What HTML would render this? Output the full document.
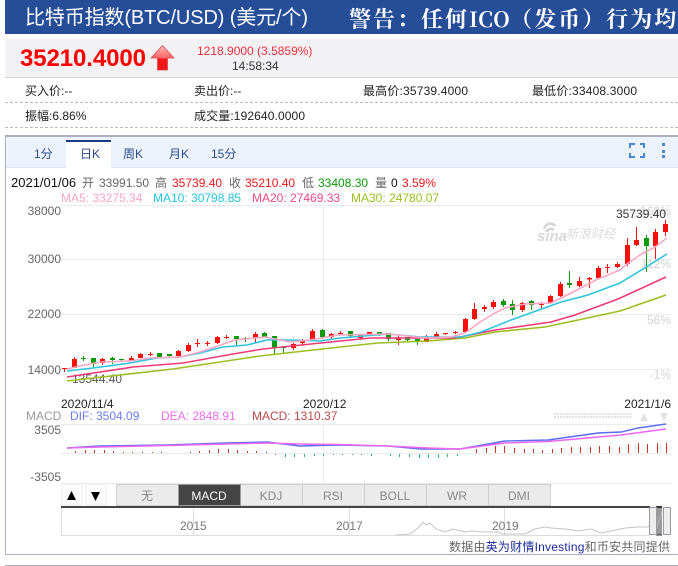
<!DOCTYPE html>
<html><head><meta charset="utf-8"><style>
html,body{margin:0;padding:0;background:#fff}
body{width:678px;height:566px;overflow:hidden;position:relative;font-family:"Liberation Sans","Noto Sans CJK SC",sans-serif}
svg{position:absolute;left:0;top:0}
text{font-family:"Liberation Sans","Noto Sans CJK SC",sans-serif;font-size:12px}
</style></head><body>
<svg width="678" height="566" viewBox="0 0 678 566">
<defs>
<linearGradient id="ag" x1="0" y1="0" x2="0" y2="1"><stop offset="0" stop-color="#fbb"/><stop offset=".5" stop-color="#f66"/><stop offset=".55" stop-color="#f01818"/><stop offset="1" stop-color="#f01818"/></linearGradient>
<pattern id="dots" width="3" height="3" patternUnits="userSpaceOnUse" x="554" y="413"><rect width="2" height="2" fill="#e2e2e2"/></pattern>
</defs>
<!-- header -->
<rect x="5" y="0" width="673" height="34" fill="#254d98"/>
<text x="25" y="24" fill="#fff" textLength="283" style="font-size:20px">比特币指数(BTC/USD) (美元/个)</text>
<text x="349" y="27" fill="#fff" font-weight="bold" style="font-family:'Noto Serif CJK SC','Liberation Serif',serif;font-size:22px;letter-spacing:2px">警告：任何<tspan style="font-size:21px;letter-spacing:.5px">ICO</tspan>（发币）行为均</text>
<!-- stats -->
<rect x="5" y="39" width="673" height="38" fill="#f2f2f5"/>
<rect x="5" y="77" width="673" height="1" fill="#d4d4da"/>
<text x="20" y="66" fill="#f00" font-weight="bold" textLength="126" style="font-size:24px">35210.4000</text>
<path d="M162.500 45.500L174 58h-6.500v12h-10V58H151z" fill="url(#ag)" stroke="#d84040" stroke-width=".7"/>
<text x="197" y="55" fill="#f5303c">1218.9000 (3.5859%)</text>
<text x="232" y="70" fill="#333">14:58:34</text>
<text x="25" y="95" fill="#222">买入价:--</text>
<text x="194" y="95" fill="#222">卖出价:--</text>
<text x="363" y="95" fill="#222" textLength="105">最高价:35739.4000</text>
<text x="532" y="95" fill="#222" textLength="105">最低价:33408.3000</text>
<text x="25" y="120" fill="#222">振幅:6.86%</text>
<text x="194" y="120" fill="#222" textLength="111">成交量:192640.0000</text>
<path d="M5 102.500H678M5 127.500H678" stroke="#bbb" stroke-dasharray="3 2" fill="none"/>
<!-- chart frame -->
<rect x="5" y="135" width="673" height="2" fill="#aeaec0"/>
<rect x="5" y="135" width="1" height="420" fill="#aeaec0"/>
<rect x="5" y="554" width="673" height="1" fill="#aeaec0"/>
<rect x="5" y="565" width="673" height="1" fill="#aeaec0"/>
<rect x="6" y="137" width="672" height="30" fill="#ecf3fd"/>
<rect x="6" y="167" width="672" height="1" fill="#d9e3f3"/>
<rect x="66" y="140" width="45" height="28" fill="#fff"/>
<rect x="66" y="140" width="45" height="2" fill="#1b3a8c"/>
<g fill="#2b4a8c">
<text x="34" y="158">1分</text><text x="80" y="158">日K</text><text x="123" y="158">周K</text><text x="169" y="158">月K</text><text x="211" y="158">15分</text>
</g>
<path d="M630 148v-4h5M640 144h4v4M644 153v4h-4M635 157h-5v-4" fill="none" stroke="#4a86d0" stroke-width="2"/>
<path d="M662 143h3v3h-3zM662 150h3v3h-3zM662 155h3v3h-3z" fill="#4a86d0"/>
<!-- info -->
<text x="11" y="187" fill="#111" style="font-size:13px">2021/01/06</text>
<text x="82" y="187" fill="#666">开</text><text x="99" y="187" fill="#666">33991.50</text>
<text x="155" y="187" fill="#666">高</text><text x="172" y="187" fill="#f01818">35739.40</text>
<text x="229" y="187" fill="#666">收</text><text x="245" y="187" fill="#f01818">35210.40</text>
<text x="302" y="187" fill="#666">低</text><text x="318" y="187" fill="#0a9a0a">33408.30</text>
<text x="375" y="187" fill="#666">量</text><text x="391" y="187" fill="#111">0</text><text x="402" y="187" fill="#f01818">3.59%</text>
<text x="61" y="202" fill="#ffa5c0">MA5: 33275.34</text>
<text x="153" y="202" fill="#22c4de">MA10: 30798.85</text>
<text x="252" y="202" fill="#f24a85">MA20: 27469.33</text>
<text x="351" y="202" fill="#98c020">MA30: 24780.07</text>
<!-- grid -->
<path d="M61 205.500H671M61 259.500H671M61 314.500H671M61 369.500H671M61 424.500H671M61 453.500H671M61 483.500H671M323.500 205V403M323.500 424V483" stroke="#ebebeb" fill="none"/>
<g fill="#666">
<text x="61" y="215" text-anchor="end">38000</text><text x="61" y="263" text-anchor="end">30000</text><text x="61" y="318" text-anchor="end">22000</text><text x="61" y="374" text-anchor="end">14000</text>
<text x="61" y="434" text-anchor="end">3505</text><text x="61" y="481" text-anchor="end">-3505</text>
</g>
<g fill="#d2d2d2" text-anchor="end">
<text x="671" y="215">160%</text><text x="671" y="268">112%</text><text x="671" y="324">56%</text><text x="671" y="379">-1%</text>
</g>
<!-- watermark -->
<text x="537" y="241" fill="#d8d8d8" font-weight="bold" font-style="italic" style="font-size:15px">sina</text>
<path d="M544 229c2-6 8-7 11-3M546 232c2-3 6-4 8-2" stroke="#d4d4d4" stroke-width="2.500" fill="none"/>
<text x="566" y="238" fill="#dcdcdc" font-style="italic" style="font-size:12.300px">新浪财经</text>
<text x="72" y="383" fill="#555">13544.40</text>
<text x="616" y="218" fill="#333">35739.40</text>
<!-- candles -->
<path fill="#f5100a" d="M72 359h5v9h-5zM100 359h5v4h-5zM129 358h5v2.500h-5zM138 354h5v4h-5zM176 351h5v5h-5zM186 345h5v6h-5zM215 337h5v6h-5zM253 334h5v4h-5zM291 344h5v4h-5zM300 341h5v2h-5zM310 331h5v9h-5zM329 334h5v3h-5zM358 335h5v3h-5zM367 332h5v2h-5zM396 338h5v2h-5zM424 337h5v5h-5zM434 334h5v3h-5zM463 319h5v13h-5zM472 309h5v10h-5zM482 307h5v2h-5zM491 302h5v5h-5zM520 303h5v7h-5zM539 303h5v2h-5zM548 296h5v7h-5zM558 284h5v12h-5zM577 281h5v5h-5zM587 278h5v1.500h-5zM596 268h5v10h-5zM615 264h5v3h-5zM625 245h5v19h-5zM634 240h5v5h-5zM653 232h5v14h-5zM663 224h5v8h-5z"/>
<path stroke="#f5100a" fill="none" d="M64.500 368v4M62 368.500h5M74.500 357v11M102.500 358v7M131.500 356v5M140.500 353v5M148 354.500h5M150.500 352v4M178.500 350v8M188.500 343v9M195 343.500h5M197.500 339v8M205 343.500h5M207.500 341v5M217.500 336v8M224 337.500h5M226.500 335v4M255.500 332v10M293.500 343v7M302.500 339v7M312.500 329v12M331.500 333v6M338 333.500h5M340.500 331v4M360.500 335v4M369.500 332v4M398.500 336v9M426.500 335v7M436.500 332v6M443 333.500h5M445.500 333v2M453 332.500h5M455.500 331v3M465.500 318v15M474.500 303v17M484.500 305v7M493.500 300v9M522.500 302v10M541.500 302v7M550.500 295v9M560.500 282v15M579.500 277v10M589.500 277v11M598.500 266v12M605 267.500h5M607.500 264v9M617.500 262v6M627.500 238v28M636.500 227v19M655.500 229v30M665.500 220v16"/>
<path fill="#0a9a0a" d="M91 358h5v6h-5zM110 358h5v2h-5zM157 353h5v4h-5zM167 354h5v2h-5zM234 336h5v3h-5zM262 333h5v4h-5zM272 336h5v12h-5zM320 330h5v7h-5zM348 331h5v5h-5zM377 332h5v2h-5zM386 333h5v6h-5zM405 337h5v3h-5zM415 339h5v2h-5zM501 301h5v4h-5zM510 304h5v6h-5zM529 301h5v4h-5zM567 283h5v2h-5zM644 238h5v8h-5z"/>
<path stroke="#0a9a0a" fill="none" d="M81 358.500h5M83.500 356v5M93.500 358v9M112.500 357v7M119 359.500h5M121.500 359v2M159.500 353v5M169.500 354v4M236.500 336v9M243 338.500h5M245.500 337v5M264.500 332v5M274.500 336v18M281 347.500h5M283.500 346v7M322.500 329v10M350.500 331v7M379.500 332v4M388.500 333v8M407.500 337v5M417.500 339v6M503.500 299v8M512.500 300v15M531.500 300v10M569.500 271v17M646.500 235v37"/>
<!-- MAs -->
<g fill="none" stroke-width="1.600" stroke-linejoin="round">
<path stroke="#9cbf1f" d="M67 381L173 369L260 356L340 347L378 343L428 341L465 338L495 332L545 327L578 320L620 311L666 295"/>
<path stroke="#f03a78" d="M67 377L133 367L183 363L233 354L263 349L340 341L371 338L455 338L495 330L551 322L575 315L618 299L666 277"/>
<path stroke="#2cc4de" d="M67 371L93 368L130 363L157 358L180 357L200 353L223 347L247 345L267 340L290 340L320 341L340 338L388 334L421 337L461 337L481 332L511 320L561 302L588 295L620 283L643 269L667 254"/>
<path stroke="#ffa6c4" d="M67 369L80 366L100 362L130 361L150 358L180 357L200 352L215 347L235 340L255 338L265 337L275 339L290 342L310 340L338 335L388 334L426 338L451 337L465 333L480 322L495 313L505 308L525 304L551 303L571 293L598 279L620 270L627 264L640 255L655 247L667 238"/>
</g>
<text x="61" y="408" fill="#222">2020/11/4</text>
<text x="303" y="408" fill="#222">2020/12</text>
<text x="671" y="408" fill="#222" text-anchor="end">2021/1/6</text>
<rect x="554" y="413" width="77" height="6" fill="url(#dots)"/>
<path d="M644 413l4 8h-8zM660 413h8l-4 8z" fill="#e2e2e2"/>
<!-- MACD -->
<text x="26" y="420" fill="#999">MACD</text>
<text x="70" y="420" fill="#6a7cf8">DIF: 3504.09</text>
<text x="161" y="420" fill="#ee6cf0">DEA: 2848.91</text>
<text x="252" y="420" fill="#b94a4a">MACD: 1310.37</text>
<path fill="none" stroke="#c43a1a" d="M75.500 451v2M85.500 450v3M94.500 450v3M104.500 450v3M113.500 451v2M123.500 452v1M132.500 452v1M142.500 452v1M152.500 452v1M161.500 452v1M190.500 452v1M199.500 451v2M209.500 450v3M218.500 449v4M228.500 449v4M237.500 450v3M247.500 451v2M256.500 451v2M266.500 452v1M476.500 449v4M486.500 448v5M495.500 446v7M504.500 446v7M514.500 448v5M524.500 449v4M533.500 449v4M542.500 450v3M552.500 449v4M561.500 448v5M571.500 447v6M580.500 447v6M590.500 447v6M599.500 446v7M609.500 446v7M619.500 447v6M628.500 444v9M638.500 443v10M647.500 444v9M657.500 443v10M666.500 443v10"/>
<path fill="none" stroke="#22b88a" d="M275.500 454v1M285.500 454v3M294.500 454v3M304.500 454v3M314.500 454v2M323.500 454v2M333.500 454v1M342.500 454v1M352.500 454v1M361.500 454v1M371.500 454v2M390.500 454v2M399.500 454v3M409.500 454v3M419.500 454v4M428.500 454v4M438.500 454v4M447.500 454v3M457.500 454v2"/>
<path fill="none" stroke="#5a6cf0" stroke-width="1.400" d="M67 448L100 446L167 445L227 443L267 442L300 446L338 445L388 446L421 449L460 449L505 441L548 440L598 433L621 432L638 428L666 424"/>
<path fill="none" stroke="#ee66ee" stroke-width="1.400" d="M67 448L100 447L167 445.500L227 444L267 443L300 444L338 444.500L388 446L428 448L460 449L505 443L548 441.500L598 437L621 435L666 429"/>
<!-- buttons -->
<rect x="62" y="484" width="20" height="21" fill="#fff" stroke="#eee"/>
<rect x="86" y="484" width="20" height="21" fill="#fff" stroke="#eee"/>
<path d="M71.500 491l4.500 9h-9zM91 492h9l-4.500 9z" fill="#000"/>
<g fill="#ebebeb" stroke="#cfcfcf">
<rect x="116.500" y="484.500" width="62" height="21"/><rect x="240.500" y="484.500" width="62" height="21"/><rect x="302.500" y="484.500" width="62" height="21"/><rect x="364.500" y="484.500" width="62" height="21"/><rect x="426.500" y="484.500" width="62" height="21"/><rect x="488.500" y="484.500" width="62" height="21"/>
</g>
<rect x="178.500" y="484.500" width="62" height="21" fill="#444" stroke="#999"/>
<g text-anchor="middle" fill="#888">
<text x="147" y="500">无</text><text x="271" y="500">KDJ</text><text x="333" y="500">RSI</text><text x="395" y="500">BOLL</text><text x="457" y="500">WR</text><text x="519" y="500">DMI</text>
</g>
<text x="209" y="500" text-anchor="middle" fill="#fff">MACD</text>
<!-- timeline -->
<rect x="61" y="506" width="589" height="2" fill="#444"/>
<path d="M61.500 508V535.500H650M193.500 508V535M349.500 508V535M504.500 508V535" fill="none" stroke="#ddd"/>
<g fill="#777">
<text x="180" y="530">2015</text><text x="336" y="530">2017</text><text x="492" y="530">2019</text>
</g>
<path fill="none" stroke="#c4c4c4" d="M396 535L410 534L418 528L423 522L426 525L430 523L436 529L445 532L453 529L465 532L471 531L485 532L498 532L503 534L525 534L535 529L545 527L551 528L565 529L578 531L591 529L601 533L611 531L625 528L638 527L648 527L653 523"/>
<rect x="656" y="507" width="6" height="28" fill="#999"/>
<rect x="656" y="506" width="6" height="2" fill="#333"/>
<path d="M656 535h6" stroke="#333"/>
<path d="M656 530L662 512" stroke="#bbb"/>
<rect x="649.500" y="507.500" width="7" height="27" fill="#eee" stroke="#9a9aaa"/>
<rect x="663.500" y="507.500" width="7" height="27" fill="#eee" stroke="#9a9aaa"/>
<text x="449" y="551" fill="#666" textLength="221">数据由<tspan fill="#1a2a9c">英为财情Investing</tspan>和币安共同提供</text>
</svg>
</body></html>
